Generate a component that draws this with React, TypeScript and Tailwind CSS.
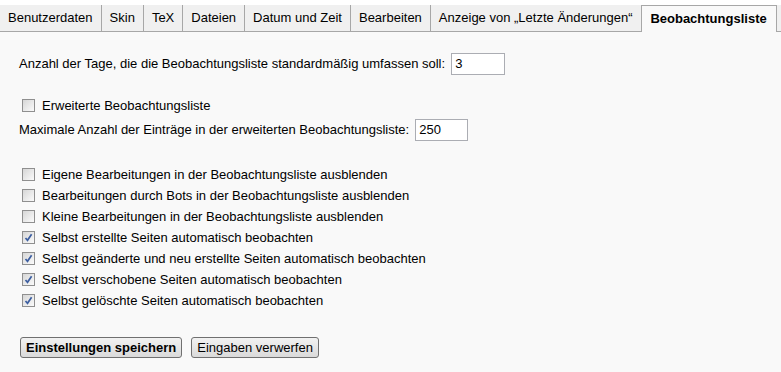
const tabs = [
  "Benutzerdaten",
  "Skin",
  "TeX",
  "Dateien",
  "Datum und Zeit",
  "Bearbeiten",
  "Anzeige von \u201eLetzte \u00c4nderungen\u201c",
];

const options: { label: string; checked: boolean }[] = [
  { label: "Eigene Bearbeitungen in der Beobachtungsliste ausblenden", checked: false },
  { label: "Bearbeitungen durch Bots in der Beobachtungsliste ausblenden", checked: false },
  { label: "Kleine Bearbeitungen in der Beobachtungsliste ausblenden", checked: false },
  { label: "Selbst erstellte Seiten automatisch beobachten", checked: true },
  { label: "Selbst geänderte und neu erstellte Seiten automatisch beobachten", checked: true },
  { label: "Selbst verschobene Seiten automatisch beobachten", checked: true },
  { label: "Selbst gelöschte Seiten automatisch beobachten", checked: true },
];

const Check = ({ checked }: { checked: boolean }) => (
  <span className="ml-[3px] mr-[7px] flex h-[13px] w-[13px] shrink-0 items-center justify-center border border-[#8f8f8f] bg-gradient-to-br from-[#d6d6d6] to-[#fbfbfb]">
    {checked && (
      <svg width="9" height="9" viewBox="0 0 9 9">
        <path d="M1.5 5 L3.5 7.3 L7.6 1.2" fill="none" stroke="#3c5ea0" strokeWidth="1.7" />
      </svg>
    )}
  </span>
);

const Box = ({ value, width }: { value: string; width: string }) => (
  <span className={`ml-[6px] flex h-[22px] ${width} items-center border border-[#abadb3] bg-white pl-[3px]`}>
    {value}
  </span>
);

const App = () => {
  return (
    <div
      className="h-[372px] w-[781px] overflow-hidden bg-[#f9f9f9] text-[13px] text-black"
      style={{ fontFamily: '"Liberation Sans", Arial, sans-serif' }}
    >
      <div className="flex h-[32px] bg-white pt-[5px]">
        <div className="flex flex-1 border-b border-[#a7a7a7] bg-[#f0f0f0]">
          {tabs.map((t) => (
            <div key={t} className="flex items-center border-r border-[#a7a7a7] px-[8px] whitespace-nowrap">
              {t}
            </div>
          ))}
          <div className="mb-[-1px] flex w-[135px] shrink-0 items-center justify-center border-t border-r border-[#a7a7a7] bg-[#f9f9f9] font-bold whitespace-nowrap">
            Beobachtungsliste
          </div>
          <div className="flex-1" />
        </div>
      </div>

      <div className="flex flex-col pl-[19px]">
        <div className="mt-[21px] flex h-[22px] items-center">
          Anzahl der Tage, die die Beobachtungsliste standardmäßig umfassen soll:
          <Box value="3" width="w-[54px]" />
        </div>

        <div className="mt-[20px] flex h-[21px] items-center">
          <Check checked={false} />
          Erweiterte Beobachtungsliste
        </div>
        <div className="mt-[3px] flex h-[22px] items-center">
          Maximale Anzahl der Einträge in der erweiterten Beobachtungsliste:
          <Box value="250" width="w-[53px]" />
        </div>

        <div className="mt-[23px] flex flex-col">
          {options.map((o) => (
            <div key={o.label} className="flex h-[21px] items-center">
              <Check checked={o.checked} />
              {o.label}
            </div>
          ))}
        </div>

        <div className="mt-[26px] flex gap-[9px] pl-[1px]">
          <button className="h-[21px] rounded-[3px] border border-[#707070] bg-gradient-to-b from-[#f2f2f2] to-[#dadada] px-[5px] font-bold">
            Einstellungen speichern
          </button>
          <button className="h-[21px] rounded-[3px] border border-[#707070] bg-gradient-to-b from-[#f2f2f2] to-[#dadada] px-[5px]">
            Eingaben verwerfen
          </button>
        </div>
      </div>
    </div>
  );
};

export default App;
